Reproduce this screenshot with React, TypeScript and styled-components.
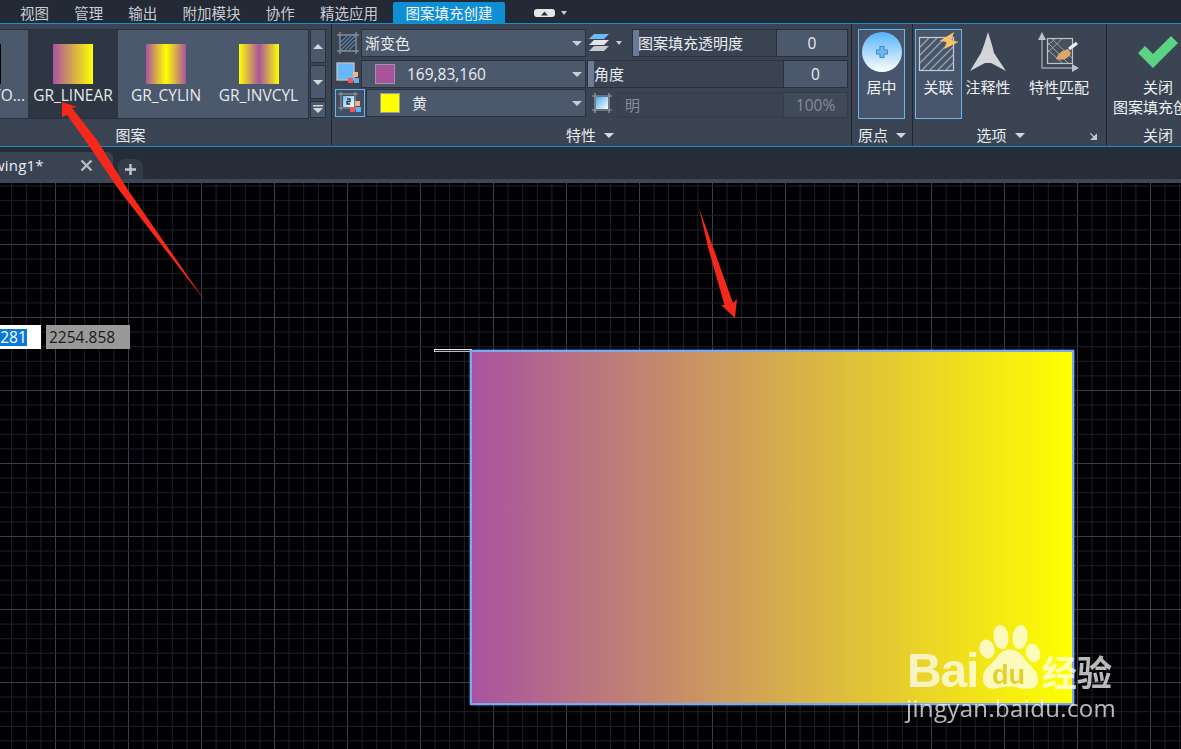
import React from "react";
import styled, { createGlobalStyle } from "styled-components";

const Global = createGlobalStyle`
  html, body { margin: 0; padding: 0; background: #000; }
  * { box-sizing: border-box; }
`;
const CJK = `"Noto Sans CJK SC", "Noto Sans", sans-serif`;
const LATIN = `"Open Sans", "Noto Sans CJK SC", sans-serif`;

const Page = styled.div`
  position: relative; width: 1181px; height: 749px; overflow: hidden;
  display: flex; flex-direction: column; background: #000; font-family: ${CJK}; color: #e8ecf0;
`;
const MenuBar = styled.div`
  height: 23px; background: #232a35; display: flex; align-items: flex-end; padding-left: 7.4px; flex: none;
`;
const MenuItem = styled.div<{ $active?: boolean }>`
  height: 21px; line-height: 21px; padding: 0 12.6px; font-size: 14.5px; white-space: nowrap;
  color: ${p => (p.$active ? "#f4f8fb" : "#c9ced4")};
  background: ${p => (p.$active ? "#0f8fd3" : "transparent")};
  border-radius: ${p => (p.$active ? "2px 2px 0 0" : "0")};
  margin-left: ${p => (p.$active ? "2.5px" : "0")};
`;
const MenuGlyph = styled.div`
  margin-left: 28.5px; height: 21px; display: flex; align-items: center; gap: 6px;
`;
const Ribbon = styled.div`
  height: 124px; flex: none; display: flex; background: #3b4453;
  border-top: 1px solid #1a8ecf; border-bottom: 1px solid #1a8ecf; overflow: hidden;
`;
const Panel = styled.div<{ $w: number; $last?: boolean }>`
  width: ${p => p.$w}px; flex: none; display: flex; flex-direction: column; position: relative;
  border-right: ${p => (p.$last ? "0" : "1px solid #20262f")};
`;
const PanelBody = styled.div`
  height: 100px; display: flex; flex: none;
`;
const PanelTitle = styled.div<{ $pl?: number; $pr?: number }>`
  flex: 1; display: flex; align-items: center; justify-content: center; gap: 8px; font-size: 15px; line-height: 20px; color: #e9edf1;
  padding-left: ${p => p.$pl ?? 0}px; padding-right: ${p => p.$pr ?? 0}px; white-space: nowrap;
`;
const Caret = styled.span`
  width: 0; height: 0; border-left: 5px solid transparent; border-right: 5px solid transparent;
  border-top: 5px solid #d4d8dd; display: inline-block;
`;
const Gallery = styled.div`
  margin-top: 5px; width: 309px; height: 90px; background: #4c586b; border: 1px solid #2a313c; border-left: 0;
  display: flex; overflow: hidden;
`;
const GalleryItem = styled.div<{ $sel?: boolean; $w?: number }>`
  width: ${p => p.$w ?? 93}px; flex: none; height: 88px; padding-top: 14px; display: flex; flex-direction: column;
  align-items: center; background: ${p => (p.$sel ? "#2e3643" : "transparent")};
  margin-right: ${p => (p.$sel ? 2 : 0)}px;
`;
const Swatch = styled.div<{ $bg: string }>`
  width: 40px; height: 40px; background: ${p => p.$bg}; flex: none;
`;
const GalleryLabel = styled.div`
  margin-top: 1px; font-family: ${LATIN}; font-size: 15.5px; line-height: 20px; color: #e6eaee; white-space: nowrap;
`;
const GalleryClip = styled.div`
  width: 28px; flex: none; height: 88px; padding-top: 14px; overflow: hidden; display: flex; flex-direction: column; align-items: flex-end;
`;
const ClipSwatch = styled.div`
  width: 28px; height: 40px; background: linear-gradient(90deg, #000 1px, transparent 1px);
`;
const ClipText = styled.div`
  margin-top: 1px; font-family: ${LATIN}; font-size: 15.5px; line-height: 20px; color: #e6eaee; padding-right: 3px; white-space: nowrap;
`;
const ScrollCol = styled.div`
  margin: 5px 0 0 1px; width: 16px; display: flex; flex-direction: column; gap: 2px;
`;
const ScrollBtn = styled.div<{ $h: number }>`
  height: ${p => p.$h}px; background: #4c586b; border: 1px solid #2a313c; display: flex; align-items: center; justify-content: center;
`;
const Props = styled.div`
  padding: 5px 3px 0 3px; width: 100%; display: flex; flex-direction: column; gap: 2px;
`;
const PropRow = styled.div<{ $mt?: number }>`
  display: flex; height: 28px; align-items: center; margin-top: ${p => p.$mt ?? 0}px;
`;
const IconCell = styled.div<{ $w: number; $sel?: boolean }>`
  width: ${p => p.$w}px; height: 28px; flex: none; display: flex; align-items: center; justify-content: center;
  ${p => (p.$sel ? "border: 1px solid #66b4ec; background: #3f4e63;" : "")}
`;
const Select = styled.div<{ $w: number; $ml?: number }>`
  width: ${p => p.$w}px; height: 28px; flex: none; background: #4c586b; border: 1px solid #2a313c; display: flex;
  align-items: center; font-size: 15px; color: #e9edf1; position: relative; padding: 0 0 2px 3px; white-space: nowrap;
  margin-left: ${p => p.$ml ?? 0}px;
`;
const SelectCaret = styled.span`
  position: absolute; right: 3px; top: 11px; width: 0; height: 0;
  border-left: 5px solid transparent; border-right: 5px solid transparent; border-top: 5px solid #c9ced4;
`;
const ColorChip = styled.span<{ $bg: string }>`
  width: 20px; height: 20px; background: ${p => p.$bg}; border: 1px solid #9a9aa0; flex: none;
  margin: 2px 12px 0 10px;
`;
const ValueText = styled.span`
  font-family: ${LATIN}; font-size: 15.5px; margin-top: 2px;
`;
const Field = styled.div<{ $ml: number; $dim?: boolean }>`
  flex: 1; margin-left: ${p => p.$ml}px; display: flex; background: #3a4352;
  border: 1px solid #2a313c; font-size: 15px; color: ${p => (p.$dim ? "#858c97" : "#e9edf1")}; position: relative;
  height: ${p => (p.$dim ? 26 : 28)}px;
  ${p => (p.$dim ? "border-color: #343c49; align-self: flex-start; margin-top: 3px;" : "")}
`;
const FieldLabel = styled.div<{ $pad: number }>`
  flex: 1; display: flex; align-items: center; padding: 0 0 2px ${p => p.$pad}px; white-space: nowrap; overflow: hidden;
`;
const Thumb = styled.span`
  position: absolute; left: 0; top: 0; bottom: 0; width: 6px; background: #6d7a93;
`;
const ValueBox = styled.div<{ $w: number; $dim?: boolean }>`
  width: ${p => p.$w}px; flex: none; display: flex; align-items: center; justify-content: center; font-family: ${LATIN}; font-size: 15.5px;
  background: ${p => (p.$dim ? "#414a59" : "#4c586b")}; border-left: 1px solid ${p => (p.$dim ? "#343c49" : "#2a313c")};
`;
const LargeBtn = styled.div<{ $w: number; $sel?: boolean; $ml?: number }>`
  width: ${p => p.$w}px; height: 90px; margin-top: 5px; margin-left: ${p => p.$ml ?? 0}px; flex: none; display: flex;
  flex-direction: column; align-items: center; font-size: 15px; line-height: 20px; color: #eef1f4; white-space: nowrap;
  ${p => (p.$sel ? "border: 1px solid #66b4ec; background: #47566c;" : "border: 1px solid transparent;")}
`;
const IconBox = styled.div`
  height: 40px; display: flex; align-items: center; justify-content: center; flex: none; margin-top: 2px;
`;
const BtnLabel = styled.div`
  margin-top: 5px; text-align: center;
`;
const Corner = styled.div`
  position: absolute; right: 9px; bottom: 6px; line-height: 0;
`;
const TabBar = styled.div`
  height: 32px; flex: none; background: #262d38; display: flex; align-items: flex-end;
`;
const DocTab = styled.div`
  width: 113px; height: 27px; background: #3a4352; border-radius: 0 6px 0 0; display: flex; align-items: center; justify-content: flex-end;
  font-family: ${LATIN}; font-size: 15px; color: #e9edf1; position: relative; padding-right: 20px;
`;
const DocName = styled.span`
  position: absolute; left: -7px; top: 3px; white-space: nowrap; letter-spacing: 0.2px;
`;
const PlusTab = styled.div`
  width: 25px; height: 20px; margin-left: 5px; background: #343c4a; border-radius: 6px 8px 0 0; display: flex; align-items: center; justify-content: center;
`;
const Strip = styled.div`
  height: 4px; flex: none; background: #3e4756;
`;
const Canvas = styled.div`
  position: relative; flex: 1; background-color: #010103;
`;
const GridSvg = styled.svg`
  position: absolute; inset: 0; display: block;
`;
const InputBox = styled.div<{ $x: number; $w: number; $bg: string }>`
  position: absolute; left: ${p => p.$x}px; top: 142px; width: ${p => p.$w}px; height: 24px; background: ${p => p.$bg};
  font-family: ${LATIN}; font-size: 15.5px; line-height: 24px; color: #1a1a1a; padding-left: 3px;
`;
const Selected = styled.span`
  position: absolute; left: 0; top: 4px; height: 17px; width: 27px; line-height: 17px; background: #0a78d7; color: #fff;
  font-family: ${LATIN}; font-size: 15.5px; text-align: center;
`;
const Rubber = styled.div`
  position: absolute; left: 434px; top: 166px; width: 38px; height: 3px; border: 1px solid #e8e8e8; border-bottom-color: #bbb; background: #222;
`;
const Hatch = styled.div`
  position: absolute; left: 470px; top: 167px; width: 604px; height: 355px;
  background: linear-gradient(90deg, #a9539f 0%, #ffff00 100%);
  border: 2px solid #7aa8f4; box-shadow: 0 0 2px #8fb6ff;
`;
const Overlay = styled.svg`
  position: absolute; left: 0; top: 0; pointer-events: none;
`;
const Mark = styled.div`
  position: absolute; left: 906px; top: 620px; width: 215px; height: 104px; color: rgba(255,255,255,.72); filter: blur(0.4px);
`;
const MarkBai = styled.span`
  position: absolute; left: 1px; top: 25px; font-family: "Liberation Sans", sans-serif; font-weight: 700; font-size: 48px; line-height: 52px; letter-spacing: -1.2px;
`;
const MarkDu = styled.span`
  position: absolute; left: 86px; top: 42px; font-family: "Liberation Sans", sans-serif; font-weight: 700; font-size: 27px; line-height: 26px; color: #e6cf2c;
`;
const MarkCn = styled.span`
  position: absolute; left: 136px; top: 28px; font-family: ${CJK}; font-weight: 700; font-size: 35px; line-height: 46px; white-space: nowrap;
`;
const MarkUrl = styled.span`
  position: absolute; left: 0; top: 73px; font-family: ${LATIN}; font-size: 24px; line-height: 30px; white-space: nowrap; letter-spacing: 0.35px;
`;

const cols: number[] = [];
const rows: number[] = [];
for (let i = 0; i < 90; i++) cols.push(-17.5 + i * 14.6);
for (let i = 0; i < 45; i++) rows.push(-11.5 + i * 14.6);

const Grid = () => (
  <GridSvg width={1181} height={566}>
    {cols.map((x, i) => (
      <line key={"c" + i} x1={x} x2={x} y1={0} y2={566} stroke={i % 5 === 0 ? "#3a3c50" : "#20212e"} strokeWidth={1} />
    ))}
    {rows.map((y, i) => (
      <line key={"r" + i} x1={0} x2={1181} y1={y} y2={y} stroke={i % 5 === 0 ? "#3a3c50" : "#20212e"} strokeWidth={1} />
    ))}
  </GridSvg>
);

const Tri = ({ up, w = 10, h = 5, c = "#d4d8dd" }: { up?: boolean; w?: number; h?: number; c?: string }) => (
  <svg width={w} height={h} viewBox="0 0 10 5" preserveAspectRatio="none"><path d={up ? "M0 5L5 0L10 5Z" : "M0 0L10 0L5 5Z"} fill={c} /></svg>
);

const HatchIcon = () => (
  <svg width="22" height="22" viewBox="0 0 22 22">
    <path d="M3 0V22M19 0V22M0 3H22M0 19H22" stroke="#8a8f97" strokeWidth="1.4" />
    <rect x="4" y="4" width="14" height="14" fill="#2f3a4a" />
    <path d="M4 10L10 4M4 14L14 4M4 18L18 4M8 18L18 8M12 18L18 12" stroke="#5e86ad" strokeWidth="1.2" />
  </svg>
);
const FillIcon = ({ two }: { two?: boolean }) => (
  <svg width="24" height="24" viewBox="0 0 24 24">
    {two ? (
      <>
        <path d="M3 1V20M17 1V20M0 3H20M0 17H20" stroke="#9aa0a8" strokeWidth="1" />
        <defs><linearGradient id="tw" x1="0" y1="0" x2="1" y2="1"><stop offset="0" stopColor="#6cbcf5" /><stop offset="1" stopColor="#fff" /></linearGradient></defs>
        <rect x="5" y="5" width="11" height="11" fill="url(#tw)" />
        <path d="M9 8H12V10.5H9V13H12" fill="none" stroke="#333" strokeWidth="1.3" />
      </>
    ) : (
      <rect x="1" y="1" width="17" height="17" fill="#66b8fb" stroke="#b9bdc3" strokeWidth="1.4" />
    )}
    <rect x="17" y="10" width="5" height="5" fill="#f3b184" />
    <rect x="12" y="16" width="5" height="5" fill="#f0555a" />
    <rect x="18" y="16" width="5" height="5" fill="#5ab3f2" />
  </svg>
);
const LayersIcon = () => (
  <svg width="20" height="19" viewBox="0 0 20 19">
    <path d="M5 0H20L15 5H0Z" fill="#6cbcf5" />
    <path d="M5 6H20L15 11H0Z" fill="#e2e4e6" />
    <path d="M5 12H20L15 17H0Z" fill="#c5c8cc" />
  </svg>
);
const GradSquareIcon = () => (
  <svg width="20" height="20" viewBox="0 0 20 20">
    <path d="M3 0V20M17 0V20M0 3H20M0 17H20" stroke="#9aa0a8" strokeWidth="1.2" />
    <defs><linearGradient id="gs" x1="0" y1="0" x2="1" y2="1"><stop offset="0" stopColor="#4ea9ee" /><stop offset="1" stopColor="#fff" /></linearGradient></defs>
    <rect x="4" y="4" width="12" height="12" fill="url(#gs)" />
  </svg>
);
const CenterIcon = () => (
  <svg width="40" height="40" viewBox="0 0 40 40">
    <defs><linearGradient id="cc" x1="0" y1="0" x2="0" y2="1"><stop offset="0" stopColor="#55b2fb" /><stop offset="1" stopColor="#fff" /></linearGradient></defs>
    <circle cx="20" cy="20" r="20" fill="url(#cc)" />
    <path d="M20 14V26M14 20H26" stroke="#3f84c4" strokeWidth="5" />
    <path d="M20 15V25M15 20H25" stroke="#6cbcf5" strokeWidth="3" />
  </svg>
);
const AssocIcon = () => (
  <svg width="42" height="40" viewBox="0 0 42 40">
    <rect x="1.5" y="5.5" width="34" height="33" fill="none" stroke="#c9ccd0" strokeWidth="1.2" />
    <path d="M2 15L11 6M2 23L19 6M2 31L27 6M4 38L35 7M12 38L35 15M20 38L35 23M28 38L35 31" stroke="#a4a9b0" strokeWidth="1.1" />
    <path d="M36 0L21.5 9L28.5 10L26.5 17L40.5 10L33.5 8Z" fill="#f6c264" />
  </svg>
);
const AnnoIcon = () => (
  <svg width="36" height="40" viewBox="0 0 36 40">
    <path d="M18 0L22 13L24 21L36 39L21 31L15 31L0 39L11 21L14 13Z" fill="#d4d5d7" />
  </svg>
);
const MatchIcon = () => (
  <svg width="42" height="40" viewBox="0 0 42 40">
    <path d="M4 6V36H36" fill="none" stroke="#9ea2a8" strokeWidth="1.4" />
    <path d="M0 8L4 0L8 8Z" fill="#bfc2c6" />
    <path d="M34 32L41 36L34 40Z" fill="#bfc2c6" />
    <rect x="9.5" y="6.5" width="25" height="25" fill="#48505e" stroke="#bfc2c6" strokeWidth="1.2" />
    <path d="M10 13L17 7M10 20L24 7M14 7L34 26M10 11L30 31M10 18L24 31" stroke="#9aa0a8" strokeWidth="1" />
    <path d="M18 27C20 21 25 18 30 17L33 21C31 26 26 29 18 27Z" fill="#dda76a" />
    <path d="M31 17L39 11" stroke="#eee" strokeWidth="3.4" />
  </svg>
);
const CheckIcon = () => (
  <svg width="40" height="32" viewBox="0 0 40 32">
    <path d="M0 17L7 10L15 18L33 0L40 7L15 32Z" fill="#5bd384" />
  </svg>
);
const ArrowCorner = () => (
  <svg width="7" height="7" viewBox="0 0 7 7"><path d="M0 0L5 5M7 1V7H1Z" stroke="#c4c8cd" strokeWidth="1.2" fill="#c4c8cd" /></svg>
);
const CloudTri = () => (
  <svg width="21" height="8" viewBox="0 0 21 8">
    <rect x="0" y="0" width="21" height="8" rx="3" fill="#e4e6e8" />
    <path d="M7 6.5L10.5 2.5L14 6.5Z" fill="#2a313c" />
  </svg>
);

export default function App() {
  return (
    <Page>
      <Global />
      <MenuBar>
        <MenuItem>视图</MenuItem>
        <MenuItem>管理</MenuItem>
        <MenuItem>输出</MenuItem>
        <MenuItem>附加模块</MenuItem>
        <MenuItem>协作</MenuItem>
        <MenuItem>精选应用</MenuItem>
        <MenuItem $active>图案填充创建</MenuItem>
        <MenuGlyph><CloudTri /><Tri w={6} h={4} c="#c9ced4" /></MenuGlyph>
      </MenuBar>
      <Ribbon>
        <Panel $w={332}>
          <PanelBody>
            <Gallery>
              <GalleryClip><ClipSwatch /><ClipText>TO...</ClipText></GalleryClip>
              <GalleryItem $sel $w={90}><Swatch $bg="linear-gradient(90deg,#a9539f,#ffff00)" /><GalleryLabel>GR_LINEAR</GalleryLabel></GalleryItem>
              <GalleryItem $w={92}><Swatch $bg="linear-gradient(90deg,#a9539f,#ffff00 50%,#a9539f)" /><GalleryLabel>GR_CYLIN</GalleryLabel></GalleryItem>
              <GalleryItem><Swatch $bg="linear-gradient(90deg,#ffff00,#a9539f 50%,#ffff00)" /><GalleryLabel>GR_INVCYL</GalleryLabel></GalleryItem>
            </Gallery>
            <ScrollCol>
              <ScrollBtn $h={34}><Tri up /></ScrollBtn>
              <ScrollBtn $h={34}><Tri /></ScrollBtn>
              <ScrollBtn $h={17}><svg width="10" height="9" viewBox="0 0 10 9"><path d="M0 0H10V1.6H0ZM0 3L10 3L5 8Z" fill="#d4d8dd" /></svg></ScrollBtn>
            </ScrollCol>
          </PanelBody>
          <PanelTitle $pr={70}>图案</PanelTitle>
        </Panel>
        <Panel $w={520}>
          <PanelBody>
            <Props>
              <PropRow>
                <IconCell $w={26}><HatchIcon /></IconCell>
                <Select $w={225}>渐变色<SelectCaret /></Select>
                <IconCell $w={26}><LayersIcon /></IconCell>
                <IconCell $w={14}><Tri w={6} h={4} c="#c9ced4" /></IconCell>
                <Field $ml={6}>
                  <Thumb />
                  <FieldLabel $pad={5}>图案填充透明度</FieldLabel>
                  <ValueBox $w={71}>0</ValueBox>
                </Field>
              </PropRow>
              <PropRow $mt={1}>
                <IconCell $w={26}><FillIcon /></IconCell>
                <Select $w={225}><ColorChip $bg="#a9539f" /><ValueText>169,83,160</ValueText><SelectCaret /></Select>
                <Field $ml={1}>
                  <Thumb />
                  <FieldLabel $pad={6}>角度</FieldLabel>
                  <ValueBox $w={64}>0</ValueBox>
                </Field>
              </PropRow>
              <PropRow $mt={-1}>
                <IconCell $w={30} $sel><FillIcon two /></IconCell>
                <Select $w={220} $ml={1}><ColorChip $bg="#ffff00" />黄<SelectCaret /></Select>
                <IconCell $w={31}><GradSquareIcon /></IconCell>
                <Field $ml={0} $dim>
                  <FieldLabel $pad={7}>明</FieldLabel>
                  <ValueBox $w={64} $dim>100%</ValueBox>
                </Field>
              </PropRow>
            </Props>
          </PanelBody>
          <PanelTitle $pr={3}>特性<Caret /></PanelTitle>
        </Panel>
        <Panel $w={61}>
          <PanelBody>
            <LargeBtn $w={47} $sel $ml={6}>
              <IconBox><CenterIcon /></IconBox>
              <BtnLabel>居中</BtnLabel>
            </LargeBtn>
          </PanelBody>
          <PanelTitle>原点<Caret /></PanelTitle>
        </Panel>
        <Panel $w={194}>
          <PanelBody>
            <LargeBtn $w={47} $sel $ml={2}>
              <IconBox><AssocIcon /></IconBox>
              <BtnLabel>关联</BtnLabel>
            </LargeBtn>
            <LargeBtn $w={52}>
              <IconBox><AnnoIcon /></IconBox>
              <BtnLabel>注释性</BtnLabel>
            </LargeBtn>
            <LargeBtn $w={90}>
              <IconBox><MatchIcon /></IconBox>
              <BtnLabel>特性匹配</BtnLabel>
              <Tri w={6} h={4} c="#c9ced4" />
            </LargeBtn>
          </PanelBody>
          <PanelTitle $pr={18}>选项<Caret /></PanelTitle>
          <Corner><ArrowCorner /></Corner>
        </Panel>
        <Panel $w={74} $last>
          <PanelBody>
            <LargeBtn $w={102}>
              <IconBox><CheckIcon /></IconBox>
              <BtnLabel>关闭<br />图案填充创建</BtnLabel>
            </LargeBtn>
          </PanelBody>
          <PanelTitle $pl={28}>关闭</PanelTitle>
        </Panel>
      </Ribbon>
      <TabBar>
        <DocTab>
          <DocName>wing1*</DocName>
          <svg width="13" height="13" viewBox="0 0 13 13"><path d="M1.5 1.5L11.5 11.5M11.5 1.5L1.5 11.5" stroke="#b8bcc2" strokeWidth="2.4" /></svg>
        </DocTab>
        <PlusTab>
          <svg width="11" height="11" viewBox="0 0 11 11"><path d="M5.5 0V11M0 5.5H11" stroke="#c4c8cd" strokeWidth="2.4" /></svg>
        </PlusTab>
      </TabBar>
      <Strip />
      <Canvas>
        <Grid />
        <InputBox $x={0} $w={41} $bg="#fff"><Selected>281</Selected></InputBox>
        <InputBox $x={46} $w={84} $bg="#999999">2254.858</InputBox>
        <Rubber />
        <Hatch />
      </Canvas>
      <Overlay width={1181} height={749} viewBox="0 0 1181 749">
        <path d="M62 102L77 107L72 108L97 140L128 190L205 301L119 190L85 140L67 115L62 117Z" fill="#f5281c" />
        <path d="M699 208L733 303L737 299L735 318L721 305L724.5 305L708 247Z" fill="#f5281c" />
      </Overlay>
      <Mark>
        <Overlay width={215} height={104} viewBox="0 0 215 104">
          <g fill="rgba(255,255,255,.72)">
            <ellipse cx="81" cy="29" rx="7.5" ry="9.5" transform="rotate(-15 81 29)" />
            <ellipse cx="127" cy="33" rx="7" ry="9.5" transform="rotate(-18 127 33)" />
            <ellipse cx="95" cy="17" rx="7.5" ry="12" transform="rotate(-6 95 17)" />
            <ellipse cx="114" cy="17" rx="7.5" ry="12" transform="rotate(6 114 17)" />
            <path d="M91 37C98 27 111 27 118 38C123 46 132 49 132 60C132 69 122 70 114 68C106 66 100 66 92 68C84 70 77 68 77 58C77 48 85 46 91 37Z" />
          </g>
        </Overlay>
        <MarkBai>Bai</MarkBai>
        <MarkDu>du</MarkDu>
        <MarkCn>经验</MarkCn>
        <MarkUrl>jingyan.baidu.com</MarkUrl>
      </Mark>
    </Page>
  );
}
